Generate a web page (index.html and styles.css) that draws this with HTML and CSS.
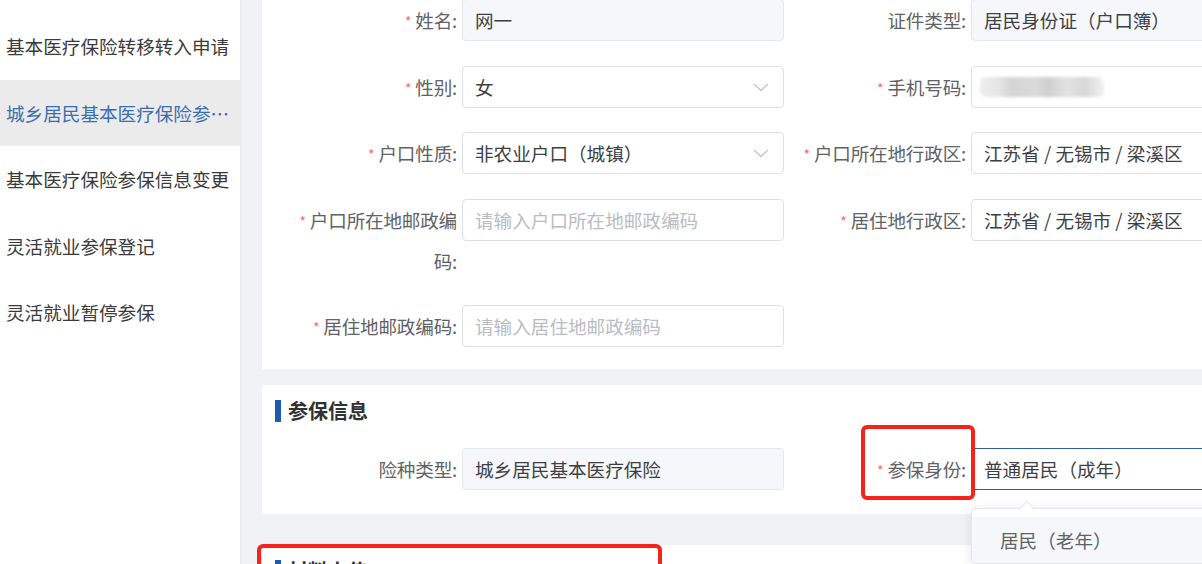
FILE: index.html
```html
<!DOCTYPE html>
<html lang="zh-CN">
<head>
<meta charset="utf-8">
<title>城乡居民基本医疗保险参保登记</title>
<link rel="stylesheet" href="styles.css">
</head>
<body>
<div class="layout">
  <aside class="sidebar">
    <div class="nav-item">基本医疗保险转移转入申请</div>
    <div class="nav-item active">城乡居民基本医疗保险参保登记</div>
    <div class="nav-item">基本医疗保险参保信息变更</div>
    <div class="nav-item">灵活就业参保登记</div>
    <div class="nav-item">灵活就业暂停参保</div>
  </aside>
  <main class="main">
    <section class="card card-base">
      <div class="row">
        <div class="field">
          <label class="label"><span class="req">*</span>姓名:</label>
          <div class="input disabled">网一</div>
        </div>
        <div class="field">
          <label class="label">证件类型:</label>
          <div class="input disabled">居民身份证（户口簿）</div>
        </div>
      </div>
      <div class="row">
        <div class="field">
          <label class="label"><span class="req">*</span>性别:</label>
          <div class="input select">女
            <svg class="chev" width="16" height="9" viewBox="0 0 16 9"><path d="M1 1l7 6.5L15 1" fill="none" stroke="#c0c4cc" stroke-width="1.3"/></svg>
          </div>
        </div>
        <div class="field">
          <label class="label"><span class="req">*</span>手机号码:</label>
          <div class="input"><span class="blur"></span></div>
        </div>
      </div>
      <div class="row">
        <div class="field">
          <label class="label"><span class="req">*</span>户口性质:</label>
          <div class="input select">非农业户口（城镇）
            <svg class="chev" width="16" height="9" viewBox="0 0 16 9"><path d="M1 1l7 6.5L15 1" fill="none" stroke="#c0c4cc" stroke-width="1.3"/></svg>
          </div>
        </div>
        <div class="field">
          <label class="label"><span class="req">*</span>户口所在地行政区:</label>
          <div class="input">江苏省 / 无锡市 / 梁溪区</div>
        </div>
      </div>
      <div class="row">
        <div class="field">
          <label class="label"><span class="req">*</span>户口所在地邮政编码:</label>
          <div class="input placeholder">请输入户口所在地邮政编码</div>
        </div>
        <div class="field">
          <label class="label"><span class="req">*</span>居住地行政区:</label>
          <div class="input">江苏省 / 无锡市 / 梁溪区</div>
        </div>
      </div>
      <div class="row">
        <div class="field">
          <label class="label"><span class="req">*</span>居住地邮政编码:</label>
          <div class="input placeholder">请输入居住地邮政编码</div>
        </div>
      </div>
    </section>

    <section class="card card-ins">
      <h3 class="title">参保信息</h3>
      <div class="row">
        <div class="field">
          <label class="label">险种类型:</label>
          <div class="input disabled">城乡居民基本医疗保险</div>
        </div>
        <div class="field field-focus">
          <span class="highlight hl-label"></span>
          <label class="label"><span class="req">*</span>参保身份:</label>
          <div class="input focus">普通居民（成年）</div>
          <div class="dropdown">
            <span class="arrow"></span>
            <div class="option">居民（老年）</div>
          </div>
        </div>
      </div>
    </section>

    <section class="card card-upload">
      <span class="highlight hl-upload"></span>
      <h3 class="title">材料上传</h3>
    </section>
  </main>
</div>
</body>
</html>
```

FILE: styles.css
```css
* { box-sizing: border-box; }
html, body {
  margin: 0;
  padding: 0;
  width: 1202px;
  height: 564px;
  overflow: hidden;
  background: #f0f2f5;
  font-family: "Noto Sans CJK SC", "Noto Sans", sans-serif;
  font-size: 18.6px;
  color: #606266;
}
.layout {
  display: flex;
  height: 564px;
  overflow: hidden;
}
.sidebar {
  width: 241px;
  flex: 0 0 241px;
  background: #fff;
  border-right: 1px solid #e6e8ec;
  padding-top: 13px;
}
.nav-item {
  height: 66.5px;
  line-height: 66.5px;
  padding: 0 8px 0 6px;
  color: #3a3a3a;
  white-space: nowrap;
  overflow: hidden;
  text-overflow: ellipsis;
}
.nav-item.active {
  background: #ebebeb;
  color: #3b6db3;
}
.main {
  flex: 1;
  padding-left: 21px;
  min-width: 0;
}
.card {
  background: #fff;
  padding-left: 25px;
  width: 1000px;
  position: relative;
}
.card-base {
  margin-top: -21px;
  padding-top: 20px;
  padding-bottom: 22px;
}
.row {
  display: flex;
  gap: 12px;
  margin-bottom: 24.5px;
}
.card-base .row:last-child { margin-bottom: 0; }
.field {
  display: flex;
  align-items: flex-start;
  position: relative;
}
.label {
  display: block;
  width: 170px;
  margin-right: 5px;
  text-align: right;
  line-height: 41px;
  color: #606266;
  letter-spacing: -0.2px;
}
.req {
  color: #f56c6c;
  font-size: 14px;
  line-height: 0;
  margin-right: 4px;
  position: relative;
  top: -1px;
}
.input {
  width: 322px;
  height: 42px;
  border: 1px solid #dcdfe6;
  border-radius: 4px;
  background: #fff;
  padding: 0 12px;
  line-height: 39px;
  color: #3d3f44;
  position: relative;
  white-space: nowrap;
  overflow: hidden;
}
.input.disabled {
  background: #f5f7fa;
  border-color: #e4e7ed;
}
.input.placeholder { color: #b9bcc2; }
.input.focus {
  border-color: #2f5f9f;
  border-radius: 0;
  border-right: none;
}
.chev {
  position: absolute;
  right: 14px;
  top: 16px;
}
.blur {
  position: absolute;
  left: 8px;
  top: 10px;
  width: 124px;
  height: 20px;
  border-radius: 6px;
  background: linear-gradient(90deg, #eeeeee 0%, #e6e6e6 15%, #d5d5d5 25%, #dadada 45%, #cfcfcf 55%, #e2e2e2 70%, #d8d8d8 85%, #f2f2f2 100%);
  filter: blur(1.5px);
}
.card-ins {
  margin-top: 16px;
  padding-top: 15px;
  padding-bottom: 24px;
}
.card-ins .row { margin-bottom: 0; }
.title {
  margin: 0 0 26px -12px;
  font-size: 20px;
  line-height: 22px;
  height: 22px;
  font-weight: 700;
  color: #303133;
  border-left: 6px solid #1f5bb0;
  padding-left: 7px;
  display: flex;
  align-items: center;
}
.highlight {
  position: absolute;
  border: 4px solid #f5231c;
  border-radius: 6px;
  pointer-events: none;
  z-index: 5;
}
.hl-label {
  left: 65px;
  top: -23px;
  width: 114px;
  height: 75px;
}
.dropdown {
  position: absolute;
  left: 175px;
  top: 60px;
  width: 322px;
  background: #fff;
  border: 1px solid #e4e7ed;
  border-radius: 4px;
  box-shadow: 0 2px 12px rgba(0, 0, 0, 0.1);
  padding-top: 8px;
  z-index: 4;
}
.arrow {
  position: absolute;
  top: -6px;
  left: 50px;
  width: 10px;
  height: 10px;
  background: #fff;
  border-left: 1px solid #e4e7ed;
  border-top: 1px solid #e4e7ed;
  transform: rotate(45deg);
}
.option {
  height: 46px;
  line-height: 46px;
  padding-left: 28px;
  background: #f5f7fa;
  color: #606266;
}
.card-upload {
  margin-top: 31px;
  padding-top: 15px;
  height: 60px;
}
.hl-upload {
  left: -5px;
  top: -1px;
  width: 405px;
  height: 80px;
}
```
